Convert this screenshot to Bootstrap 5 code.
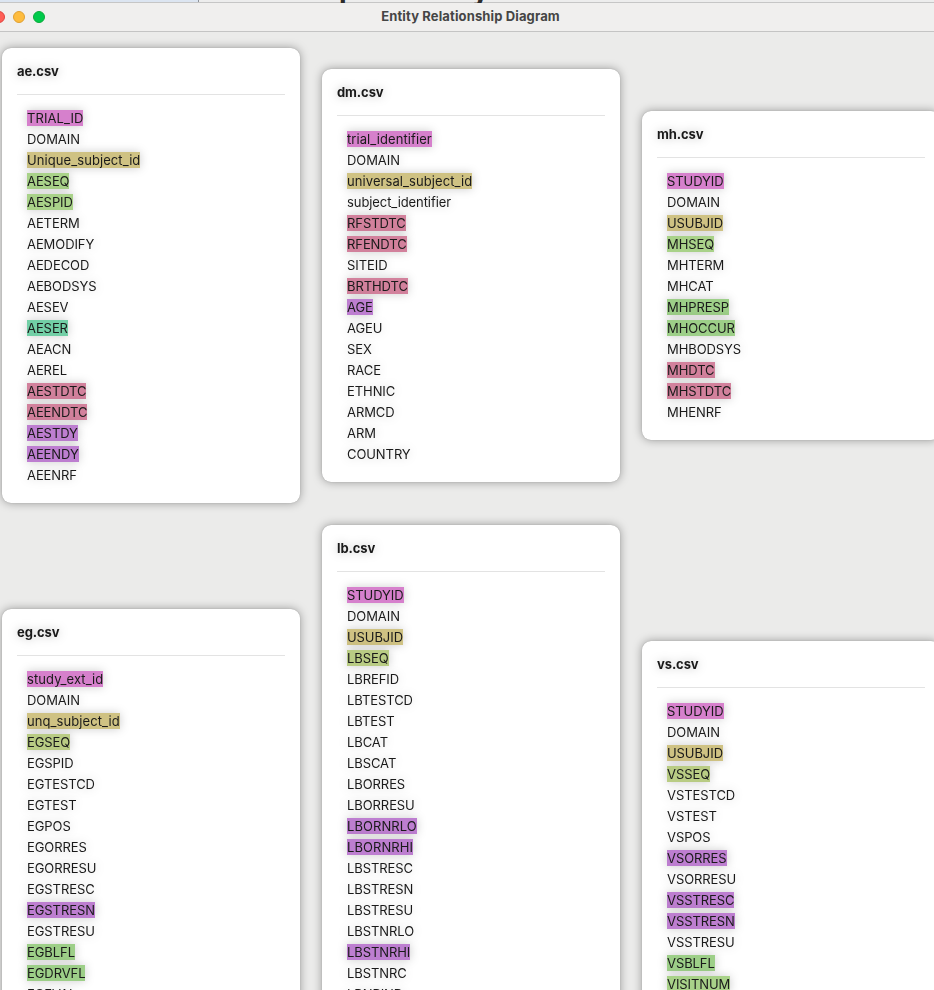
<!DOCTYPE html>
<html lang="en">
<head>
<meta charset="utf-8">
<meta name="viewport" content="width=device-width, initial-scale=1">
<title>Entity Relationship Diagram</title>
<link href="https://cdn.jsdelivr.net/npm/bootstrap@5.3.0/dist/css/bootstrap.min.css" rel="stylesheet">
<style>
body { height: 990px; background: #ebebea; color: #1a1a1a; font: 13px/16px Inter, "Liberation Sans", sans-serif; }
.backdrop { height: 3px; background: #ededed; border-bottom: 1px solid #c6c6c6; }
.backdrop-pane { width: 199px; height: 3px; background: #dce5f1; border-right: 1px solid #8d9299; border-bottom: 1px solid #a9b5c6; }
.peek { position: absolute; top: -24px; font-size: 28px; line-height: 28px; height: 27px; overflow: hidden; color: #2b2b2b; }
.peek-p { left: 339px; }
.peek-y { left: 472px; }
.titlebar { height: 29px; background: #f0efee; border-bottom: 1px solid #c4c4c4; color: #454545; }
.titlebar h1 { width: 941px; font-size: 13px; line-height: 16px; letter-spacing: .13px; padding-top: 5px; }
.light { position: absolute; top: 11px; width: 12px; height: 12px; border-radius: 50%; border: 1px solid; }
.light-close { left: -7px; background: #ff5f57; border-color: #e0443e; }
.light-min { left: 13px; background: #febc3e; border-color: #dfa033; }
.light-max { left: 33px; background: #00ca4b; border-color: #0caa3a; }
.diagram { height: 958px; padding-left: 2px; }
.lane { width: 298px; margin-right: 22px; }
.entity { background: #fff; border-radius: 9px; padding: 15px; box-shadow: 0 0 10px rgba(0,0,0,.36), 0 0 1px rgba(0,0,0,.25); }
.entity h2 { font-size: 13px; line-height: 16px; letter-spacing: -.1px; margin: 0 0 15px; filter: drop-shadow(0 0 5px rgba(0,0,0,.26)); }
.entity ul { border-top: 1px solid #e3e3e3; margin: 0; padding: 15px 10px 5px; gap: 5px; }
.entity li { height: 16px; letter-spacing: -.08px; filter: drop-shadow(0 0 5px rgba(0,0,0,.2)); white-space: nowrap; }
.entity li.mixed { letter-spacing: .08px; }
.entity li.spaced { letter-spacing: .08px; }
.k-study { background: #d680cc; }
.k-subject { background: #cfc283; }
.k-seq { background: #a9d289; }
.k-seq2 { background: #b9cc84; }
.k-flag { background: #9dcf88; }
.k-bool { background: #72cfa6; }
.k-date { background: #d2819c; }
.k-num { background: #bd7ed0; }
.lane-1 { padding-top: 16px; } .lane-1 .entity + .entity { margin-top: 106px; }
.lane-2 { padding-top: 37px; } .lane-2 .entity + .entity { margin-top: 43px; }
.lane-3 { padding-top: 79px; } .lane-3 .entity + .entity { margin-top: 201px; }
</style>
</head>
<body class="overflow-hidden position-relative">
<div class="backdrop overflow-hidden"><div class="backdrop-pane"></div><span class="peek peek-p fw-bold" aria-hidden="true">p</span><span class="peek peek-y fw-bold" aria-hidden="true">y</span></div>
<header class="titlebar">
  <span class="light light-close"></span><span class="light light-min"></span><span class="light light-max"></span>
  <h1 class="fw-bold text-center mb-0">Entity Relationship Diagram</h1>
</header>
<main class="diagram d-flex overflow-hidden">
  <div class="lane lane-1 flex-shrink-0">
    <section class="entity"><h2 class="fw-bold">ae.csv</h2>
      <ul class="list-unstyled d-flex flex-column align-items-start">
        <li class="k-study spaced">TRIAL_ID</li><li>DOMAIN</li><li class="k-subject mixed">Unique_subject_id</li><li class="k-seq">AESEQ</li><li class="k-seq">AESPID</li><li>AETERM</li><li>AEMODIFY</li><li>AEDECOD</li><li>AEBODSYS</li><li>AESEV</li><li class="k-bool">AESER</li><li>AEACN</li><li>AEREL</li><li class="k-date">AESTDTC</li><li class="k-date">AEENDTC</li><li class="k-num">AESTDY</li><li class="k-num">AEENDY</li><li>AEENRF</li>
      </ul></section>
    <section class="entity"><h2 class="fw-bold">eg.csv</h2>
      <ul class="list-unstyled d-flex flex-column align-items-start">
        <li class="k-study mixed">study_ext_id</li><li>DOMAIN</li><li class="k-subject mixed">unq_subject_id</li><li class="k-seq2">EGSEQ</li><li>EGSPID</li><li>EGTESTCD</li><li>EGTEST</li><li>EGPOS</li><li>EGORRES</li><li>EGORRESU</li><li>EGSTRESC</li><li class="k-num">EGSTRESN</li><li>EGSTRESU</li><li class="k-flag">EGBLFL</li><li class="k-flag">EGDRVFL</li><li>EGEVAL</li>
      </ul></section>
  </div>
  <div class="lane lane-2 flex-shrink-0">
    <section class="entity"><h2 class="fw-bold">dm.csv</h2>
      <ul class="list-unstyled d-flex flex-column align-items-start">
        <li class="k-study mixed">trial_identifier</li><li>DOMAIN</li><li class="k-subject mixed">universal_subject_id</li><li>subject_identifier</li><li class="k-date">RFSTDTC</li><li class="k-date">RFENDTC</li><li>SITEID</li><li class="k-date">BRTHDTC</li><li class="k-num">AGE</li><li>AGEU</li><li>SEX</li><li>RACE</li><li>ETHNIC</li><li>ARMCD</li><li>ARM</li><li>COUNTRY</li>
      </ul></section>
    <section class="entity"><h2 class="fw-bold">lb.csv</h2>
      <ul class="list-unstyled d-flex flex-column align-items-start">
        <li class="k-study">STUDYID</li><li>DOMAIN</li><li class="k-subject">USUBJID</li><li class="k-seq2">LBSEQ</li><li>LBREFID</li><li>LBTESTCD</li><li>LBTEST</li><li>LBCAT</li><li>LBSCAT</li><li>LBORRES</li><li>LBORRESU</li><li class="k-num spaced">LBORNRLO</li><li class="k-num spaced">LBORNRHI</li><li>LBSTRESC</li><li>LBSTRESN</li><li>LBSTRESU</li><li>LBSTNRLO</li><li class="k-num">LBSTNRHI</li><li>LBSTNRC</li><li>LBNRIND</li>
      </ul></section>
  </div>
  <div class="lane lane-3 flex-shrink-0">
    <section class="entity"><h2 class="fw-bold">mh.csv</h2>
      <ul class="list-unstyled d-flex flex-column align-items-start">
        <li class="k-study">STUDYID</li><li>DOMAIN</li><li class="k-subject">USUBJID</li><li class="k-seq">MHSEQ</li><li>MHTERM</li><li>MHCAT</li><li class="k-flag">MHPRESP</li><li class="k-flag">MHOCCUR</li><li>MHBODSYS</li><li class="k-date">MHDTC</li><li class="k-date">MHSTDTC</li><li>MHENRF</li>
      </ul></section>
    <section class="entity"><h2 class="fw-bold">vs.csv</h2>
      <ul class="list-unstyled d-flex flex-column align-items-start">
        <li class="k-study">STUDYID</li><li>DOMAIN</li><li class="k-subject">USUBJID</li><li class="k-seq2">VSSEQ</li><li>VSTESTCD</li><li>VSTEST</li><li>VSPOS</li><li class="k-num">VSORRES</li><li>VSORRESU</li><li class="k-num">VSSTRESC</li><li class="k-num">VSSTRESN</li><li>VSSTRESU</li><li class="k-flag">VSBLFL</li><li class="k-seq">VISITNUM</li>
      </ul></section>
  </div>
</main>
<script src="https://cdn.jsdelivr.net/npm/bootstrap@5.3.0/dist/js/bootstrap.bundle.min.js"></script>
</body>
</html>
